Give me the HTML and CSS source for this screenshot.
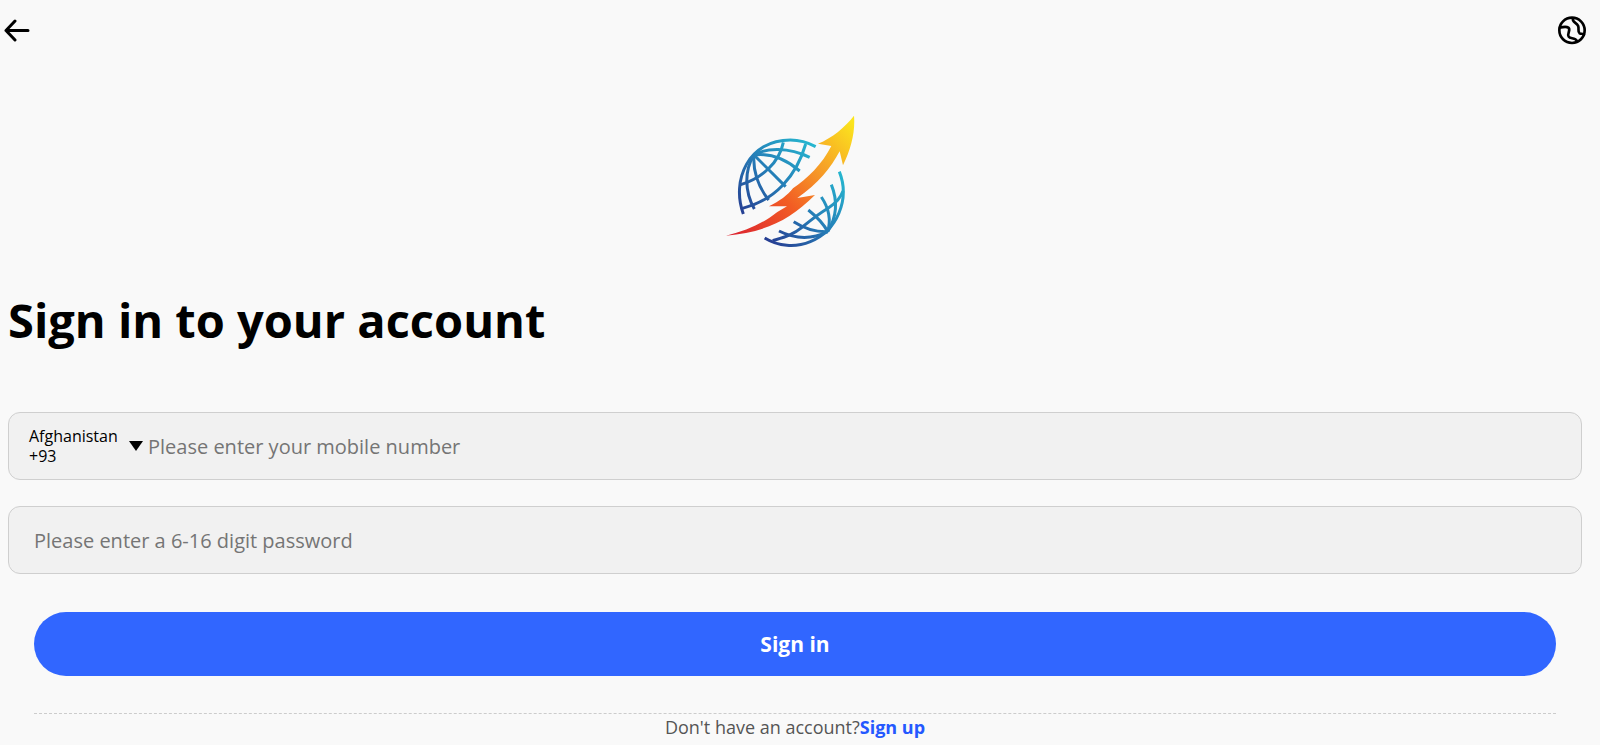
FILE: index.html
```html
<!DOCTYPE html>
<html lang="en">
  <head>
    <meta charset="UTF-8" />
    <meta name="viewport" content="width=device-width, initial-scale=1.0" />
    <title>Sign in</title>
    <link rel="stylesheet" href="styles.css">
  </head>

  <body>
    <header class="topbar">
      <a href="#" class="back" aria-label="Back">
        <svg width="26" height="24" viewBox="0 0 26 24" fill="none" stroke="#000" stroke-width="3" stroke-linecap="round" stroke-linejoin="round">
          <path d="M11 3L2 12.500L11 22M2 12.500H24" />
        </svg>
      </a>
      <button type="button" class="language" aria-label="Language">
        <svg width="30" height="30" viewBox="0 0 90 90" fill="none" stroke="#000" stroke-width="8" stroke-linecap="round" stroke-linejoin="round">
          <circle cx="45" cy="46" r="38" />
          <path d="M9 37C18 37 27 33 34 38C43 45 29 55 35 65C40 73 54 66 61 79" />
          <path d="M48 10C44 21 59 23 63 32C68 42 60 49 68 55C73 58 78 54 81 59" />
        </svg>
      </button>
    </header>

    <main class="container">
      <svg class="logo" viewBox="15 0 450 450" fill="none" aria-hidden="true">
        <defs>
          <linearGradient id="globe" gradientUnits="userSpaceOnUse" x1="110" y1="380" x2="350" y2="140">
            <stop offset="0" stop-color="#27388f" />
            <stop offset="0.5" stop-color="#2580b8" />
            <stop offset="1" stop-color="#26bfd3" />
          </linearGradient>
          <linearGradient id="arrow" gradientUnits="userSpaceOnUse" x1="60" y1="400" x2="420" y2="60">
            <stop offset="0" stop-color="#dc2430" />
            <stop offset="0.38" stop-color="#f25c24" />
            <stop offset="0.65" stop-color="#f69a27" />
            <stop offset="1" stop-color="#fbe51e" />
          </linearGradient>
        </defs>
        <g stroke="url(#globe)" stroke-width="9">
          <path d="M85 327C48 226 100 105 226 105C253 105 278 112 302 125" />
          <path d="M117 150C154 128 220 126 284 157" />
          <path d="M117 150C164 144 213 163 254 198" />
          <path d="M117 150L212 245" />
          <path d="M117 150C113 194 128 244 161 285" />
          <path d="M117 150C88 196 88 258 118 312" />
          <path d="M205 112C193 172 142 219 77 239" />
          <path d="M272 117C245 213 179 286 82 310" />
          <path d="M373 200C406 283 366 378 286 410C240 429 190 424 149 399" />
          <path d="M338 380C366 335 367 284 349 239" />
          <path d="M338 380C349 343 340 307 319 276" />
          <path d="M338 380C326 356 305 335 280 315" />
          <path d="M338 380C302 381 267 370 236 350" />
          <path d="M338 380C290 404 238 401 192 378" />
          <path d="M384 258C376 282 360 296 340 309C304 331 286 347 261 367C233 390 205 397 173 407" />
        </g>
        <path fill="url(#arrow)" d="M33 392C94 378 144 355 187 321L216 304L162 304C194 289 218 270 234 250C276 222 322 177 349 123L309 116C351 99 391 66 417 32C421 81 409 130 384 181L374 139C348 188 309 237 247 279L300 270C220 350 144 382 33 392Z" />
      </svg>

      <h1>Sign in to your account</h1>

      <form class="form">
        <div class="field">
          <div class="country">
            <span class="country-name" aria-hidden="true">Afghanistan +93</span>
            <span class="caret"></span>
            <select class="country-select" name="country" aria-label="Country code">
              <option value="93">Afghanistan +93</option>
            </select>
          </div>
          <input class="mobile" type="tel" name="mobile" aria-label="Mobile number" placeholder="Please enter your mobile number" />
        </div>
        <div class="field">
          <input class="password" type="password" name="password" aria-label="Password" placeholder="Please enter a 6-16 digit password" />
        </div>
        <button type="submit" class="submit">Sign in</button>
      </form>

      <p class="signup">Don't have an account?<a href="#">Sign up</a></p>
    </main>
  </body>
</html>
```

FILE: styles.css
```css
* {
  box-sizing: border-box;
}

body {
  margin: 0;
  background: #f9f9f9;
  color: #000;
  font-family: "Open Sans", "Noto Sans", sans-serif;
}

.topbar {
  display: flex;
  justify-content: space-between;
  align-items: center;
  height: 60px;
  padding: 0 13px 0 4px;
}

.back,
.language {
  display: flex;
}

.language {
  padding: 0;
  border: none;
  background: none;
  cursor: pointer;
}

.container {
  padding: 45px 18px 0 8px;
}

.logo {
  display: block;
  width: 150px;
  height: 150px;
  margin: 0 auto;
}

h1 {
  margin: 32px 0 59px;
  font-size: 47px;
  line-height: 66px;
}

.form {
  display: flex;
  flex-direction: column;
  gap: 26px;
}

.field {
  display: flex;
  align-items: center;
  height: 68px;
  border: 1px solid #cfcfcf;
  border-radius: 12px;
  background: #f1f1f1;
}

.field input {
  flex: 1;
  min-width: 0;
  height: 100%;
  padding: 0;
  border: none;
  outline: none;
  background: none;
  font-family: inherit;
  font-size: 20px;
}

.field input::placeholder {
  color: #757575;
}

.field .password {
  padding: 0 25px;
}

.country {
  position: relative;
  display: flex;
  align-items: center;
  width: 139px;
  padding-left: 20px;
}

.country-name {
  width: 100px;
  font-size: 16px;
  line-height: 20px;
}

/* the real select covers the label, which can wrap to two lines */
.country-select {
  position: absolute;
  inset: 0;
  opacity: 0;
  cursor: pointer;
}

.caret {
  border: 7px solid transparent;
  border-top: 10px solid #000;
  border-bottom: none;
}

.submit {
  height: 64px;
  margin: 12px 26px 0;
  border: none;
  border-radius: 32px;
  background: #3166ff;
  color: #fff;
  font-family: inherit;
  font-size: 21px;
  font-weight: bold;
  cursor: pointer;
}

.signup {
  margin: 37px 26px 0;
  border-top: 1px dashed #ccc;
  color: #555;
  font-size: 18px;
  line-height: 26px;
  text-align: center;
}

.signup a {
  color: #2458ff;
  font-weight: bold;
  text-decoration: none;
}
```
